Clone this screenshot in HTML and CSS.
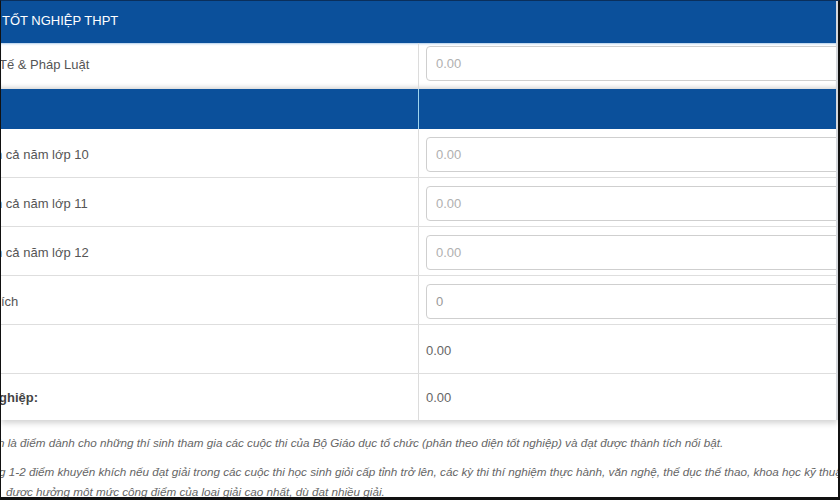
FILE: index.html
```html
<!DOCTYPE html>
<html lang="vi">
<head>
    <meta charset="UTF-8">
    <meta name="viewport" content="width=device-width, initial-scale=1.0">
    <title>Tính điểm tốt nghiệp THPT</title>
    <link rel="stylesheet" href="styles.css">
</head>
<body>

    <div class="khung">
        <div class="bang">
            <div class="tieu-de">TỐT NGHIỆP THPT</div>

            <div class="dong dong-dau">
                <div class="nhan lech-2">Tế &amp; Pháp Luật</div>
                <div class="o"><input type="text" placeholder="0.00"></div>
            </div>

            <div class="dong dong-xanh">
                <div class="nhan"></div>
                <div class="o"></div>
            </div>

            <div class="dong">
                <div class="nhan lech-6">h cả năm lớp 10</div>
                <div class="o"><input type="text" placeholder="0.00"></div>
            </div>
            <div class="dong">
                <div class="nhan lech-6">h cả năm lớp 11</div>
                <div class="o"><input type="text" placeholder="0.00"></div>
            </div>
            <div class="dong">
                <div class="nhan lech-6">h cả năm lớp 12</div>
                <div class="o"><input type="text" placeholder="0.00"></div>
            </div>
            <div class="dong">
                <div class="nhan">ích</div>
                <div class="o"><input type="text" class="co-gia-tri" value="0"></div>
            </div>
            <div class="dong">
                <div class="nhan"></div>
                <div class="o ket-qua">0.00</div>
            </div>
            <div class="dong dong-cuoi">
                <div class="nhan dam lech-2">ghiệp:</div>
                <div class="o ket-qua">0.00</div>
            </div>
        </div>

        <div class="ghi-chu">
            <p class="lech-3">h là điểm dành cho những thí sinh tham gia các cuộc thi của Bộ Giáo dục tổ chức (phân theo diện tốt nghiệp) và đạt được thành tích nổi bật.</p>
            <p class="lech-2">g 1-2 điểm khuyến khích nếu đạt giải trong các cuộc thi học sinh giỏi cấp tỉnh trở lên, các kỳ thi thí nghiệm thực hành, văn nghệ, thể dục thể thao, khoa học kỹ thuật<br><span class="dong-tiep">được hưởng một mức cộng điểm của loại giải cao nhất, dù đạt nhiều giải.</span></p>
        </div>
    </div>

</body>
</html>
```

FILE: styles.css
```css
        * {
            box-sizing: border-box;
        }
        body {
            margin: 0;
            background-color: #000;
            font-family: Arial, "Liberation Sans", sans-serif;
        }
        .khung {
            width: 840px;
            height: 500px;
            overflow: hidden;
            background-color: #fff;
            border-top: 1px solid #0a2f5c;
            border-left: 1px solid #111;
            border-right: 2px solid #111;
            border-bottom: 3px solid #111;
        }
        .bang {
            border-right: 2px solid #d5d8dc;
            box-shadow: 0 3px 6px rgba(0, 0, 0, 0.18);
            background-color: #fff;
        }
        .tieu-de {
            height: 42px;
            line-height: 40px;
            padding-left: 1px;
            background-color: #0b509b;
            color: #fff;
            font-size: 13px;
        }
        .dong {
            display: flex;
            height: 49px;
            border-bottom: 1px solid #dedede;
            font-size: 13px;
            color: #555;
        }
        .dong-cuoi {
            height: 46px;
            border-bottom: none;
        }
        .nhan {
            width: 418px;
            flex-shrink: 0;
            overflow: hidden;
            white-space: nowrap;
            display: flex;
            align-items: center;
            padding-top: 2px;
            border-right: 1px solid #dcdcdc;
        }
        .dong-cuoi .nhan,
        .dong-cuoi .o {
            padding-top: 0;
        }
        .lech-2 {
            text-indent: -2px;
        }
        .lech-3 {
            text-indent: -3px;
        }
        .lech-6 {
            text-indent: -6px;
        }
        .dam {
            font-weight: bold;
            color: #444;
        }
        .o {
            flex: 1;
            overflow: hidden;
            display: flex;
            align-items: center;
            padding-left: 7px;
            padding-top: 2px;
        }
        .o input {
            width: 440px;
            flex-shrink: 0;
            height: 35px;
            padding: 0 9px;
            border: 1px solid #cfcfcf;
            border-radius: 4px;
            font-family: Arial, "Liberation Sans", sans-serif;
            font-size: 13px;
            color: #777;
            background-color: #fff;
        }
        .o input::placeholder {
            color: #b0b0b0;
        }
        .o input.co-gia-tri {
            color: #999;
        }
        .ket-qua {
            color: #666;
        }
        .dong-dau {
            height: 46px;
            border-bottom: none;
            box-shadow: inset 0 2px 2px -1px rgba(120, 170, 220, 0.6), inset 0 -5px 4px -3px rgba(0, 0, 0, 0.16);
        }
        .dong-dau .nhan {
            padding-top: 0;
            padding-bottom: 4px;
        }
        .dong-dau .o {
            padding-top: 0;
            padding-bottom: 6px;
        }
        .dong-xanh {
            height: 40px;
            background-color: #0b509b;
            border-bottom: none;
        }
        .dong-xanh .nhan {
            border-right: 1px solid #9fd4ee;
        }
        .ghi-chu {
            padding-top: 13px;
            font-size: 11.7px;
            font-style: italic;
            color: #666;
        }
        .ghi-chu p {
            margin: 0 0 9px 0;
            white-space: nowrap;
            line-height: 20px;
        }
        .dong-tiep {
            display: inline-block;
            text-indent: 0;
            padding-left: 5px;
        }
```
